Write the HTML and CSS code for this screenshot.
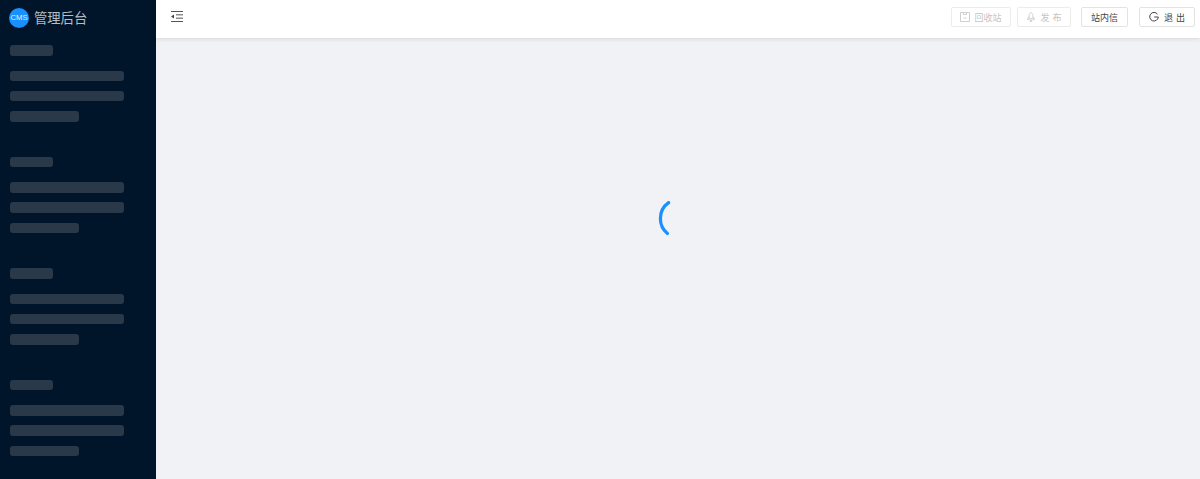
FILE: index.html
```html
<!DOCTYPE html>
<html lang="zh-CN">
<head>
<meta charset="utf-8">
<title>管理后台</title>
<link rel="stylesheet" href="styles.css">
</head>
<body>
<div class="app">
  <aside class="sider">
    <div class="brand">
      <span class="logo">CMS</span>
      <span class="brand-name">管理后台</span>
    </div>
    <div class="menu">
      <div class="group"><div class="sk sk-title"></div><div class="sk sk-full"></div><div class="sk sk-full"></div><div class="sk sk-short"></div></div>
      <div class="group"><div class="sk sk-title"></div><div class="sk sk-full"></div><div class="sk sk-full"></div><div class="sk sk-short"></div></div>
      <div class="group"><div class="sk sk-title"></div><div class="sk sk-full"></div><div class="sk sk-full"></div><div class="sk sk-short"></div></div>
      <div class="group"><div class="sk sk-title"></div><div class="sk sk-full"></div><div class="sk sk-full"></div><div class="sk sk-short"></div></div>
    </div>
  </aside>
  <div class="main">
    <header class="topbar">
      <svg class="fold" viewBox="0 0 12 11" width="12" height="11" aria-hidden="true">
        <path d="M0 .5h12M5 3.83h7M5 7.17h7M0 10.5h12" stroke="#555" stroke-width="1" fill="none"/>
        <path d="M3 3.4v4.2L0 5.5z" fill="#444"/>
      </svg>
      <div class="actions">
        <button class="btn btn-recycle is-disabled" type="button">
          <svg class="ico" viewBox="0 0 10 10" width="10" height="10" aria-hidden="true"><path d="M.5 .5h9v9h-9zM3.5 .5v2h3v-2M3.5 6h3" fill="none" stroke="currentColor" stroke-width=".8"/></svg>
          <span>回收站</span>
        </button>
        <button class="btn btn-publish is-disabled" type="button">
          <svg class="ico" viewBox="0 0 10 10" width="10" height="10" aria-hidden="true"><path d="M5 .3C6.6 1.6 7 3.2 7 4.6v2H3V4.6C3 3.2 3.4 1.6 5 .3zM3 4.8 1.6 6.6v1h1.6M7 4.8l1.4 1.8v1H6.8M4.2 8h1.6v1.6H4.2z" fill="none" stroke="currentColor" stroke-width=".8"/></svg>
          <span class="spaced">发 布</span>
        </button>
        <button class="btn btn-msg" type="button"><span>站内信</span></button>
        <button class="btn btn-exit" type="button">
          <svg class="ico ico-exit" viewBox="0 0 10 10" width="10" height="10" aria-hidden="true"><path d="M8.5 2.2A4.3 4.3 0 1 0 9.3 5H5.2" fill="none" stroke="currentColor" stroke-width="1"/></svg>
          <span class="spaced">退 出</span>
        </button>
      </div>
    </header>
    <main class="content">
      <svg class="spinner" viewBox="0 0 18 36" width="18" height="36" aria-hidden="true">
        <path d="M10.6 1.6C5.4 5.2 2.4 11 2.4 17.5c0 6 2.6 11.4 7 15" fill="none" stroke="#1890ff" stroke-width="3.2" stroke-linecap="round"/>
      </svg>
    </main>
  </div>
</div>
</body>
</html>
```
FILE: styles.css
```css
* { box-sizing: border-box; }
html, body { margin: 0; height: 100%; overflow: hidden; }
body { font-family: "Liberation Sans", "Noto Sans CJK SC", sans-serif; background: #f0f2f5; }

.app { display: flex; height: 479px; }

.sider { width: 156px; flex: none; background: #001529; padding: 0 10px; overflow: hidden; }
.brand { display: flex; align-items: flex-start; height: 38px; margin-left: -1px; gap: 5px; padding-top: 8px; }
.logo {
  width: 20px; height: 20px; border-radius: 50%; background: #1890ff; color: rgba(255, 255, 255, .9);
  font-size: 7.7px; line-height: 20px; text-align: center; flex: none;
}
.brand-name { color: rgba(255, 255, 255, .72); font-size: 13.3px; line-height: 20px; font-family: "Noto Sans CJK SC", sans-serif; }

.menu { padding-top: 7px; display: flex; flex-direction: column; gap: 35px; }
.group { display: flex; flex-direction: column; }
.sk { height: 10.5px; border-radius: 3px; background: #2a394a; margin-bottom: 9.75px; }
.sk:last-child { margin-bottom: 0; }
.sk-title { width: 43px; margin-bottom: 15px; }
.sk-full { width: 114px; }
.sk-short { width: 69px; }

.main { flex: 1; display: flex; flex-direction: column; min-width: 0; }
.topbar {
  height: 38px; flex: none; background: #fff; display: flex; align-items: flex-start;
  justify-content: space-between; padding: 7px 5px 0 15px;
  box-shadow: 0 1px 4px rgba(0, 21, 41, .12);
  position: relative;
}
.fold { margin-top: 4px; }
.actions { display: flex; }
.btn {
  height: 20px; padding: 0; border: 1px solid #e3e3e3; border-radius: 2px; background: #fff;
  color: #444; font-size: 9px; font-family: "Noto Sans CJK SC", sans-serif;
  display: flex; align-items: center; justify-content: center; gap: 4px; line-height: 1;
}
.btn.is-disabled { color: #c4c4c4; border-color: #ececec; }
.btn-recycle { width: 60px; margin-right: 6px; }
.btn-publish { width: 54px; margin-right: 10px; }
.btn-msg { width: 47px; margin-right: 11px; }
.btn-exit { width: 56px; gap: 5px; }
.ico { flex: none; }
.spaced { word-spacing: 1px; }

.content { flex: 1; position: relative; display: flex; padding: 163px 0 0 502px; align-items: flex-start; }
```
